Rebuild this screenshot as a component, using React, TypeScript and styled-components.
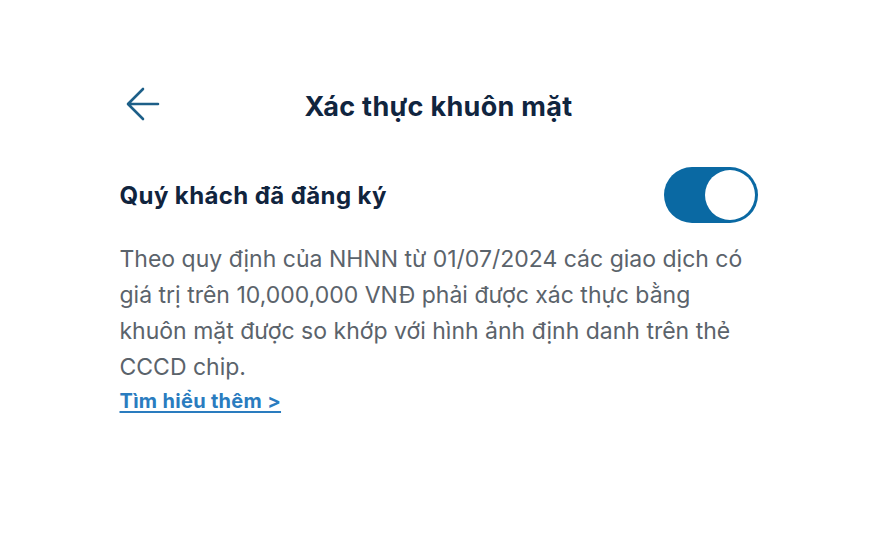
import React, { useState } from "react";
import styled, { createGlobalStyle } from "styled-components";

const GlobalStyle = createGlobalStyle`
  html, body {
    margin: 0;
    padding: 0;
    background: #ffffff;
    font-family: "Inter", "Noto Sans", sans-serif;
  }
`;

const Page = styled.div`
  width: 880px;
  height: 544px;
  box-sizing: border-box;
  padding-right: 3px;
  display: flex;
  justify-content: center;
  background: #ffffff;
`;

const Column = styled.div`
  width: 638px;
  padding-top: 87px;
  display: flex;
  flex-direction: column;
`;

const Header = styled.div`
  position: relative;
  height: 38px;
  display: flex;
  align-items: center;
  justify-content: center;
`;

const BackButton = styled.button`
  position: absolute;
  left: 6px;
  top: 0;
  width: 34px;
  height: 34px;
  padding: 0;
  border: 0;
  background: none;
  cursor: pointer;
  display: flex;
`;

const Title = styled.h1`
  margin: 0;
  font-size: 27px;
  font-weight: 700;
  letter-spacing: 0.3px;
  color: #10253f;
`;

const Row = styled.div`
  margin-top: 42px;
  display: flex;
  align-items: center;
  justify-content: space-between;
`;

const Label = styled.div`
  font-size: 24px;
  font-weight: 700;
  letter-spacing: 0.4px;
  color: #10243e;
`;

const Track = styled.button<{ $on: boolean }>`
  width: 94px;
  height: 56px;
  padding: 3px;
  border: 0;
  border-radius: 28px;
  background: ${(p) => (p.$on ? "#0a69a3" : "#c9cfd6")};
  display: flex;
  justify-content: ${(p) => (p.$on ? "flex-end" : "flex-start")};
  cursor: pointer;
`;

const Thumb = styled.span`
  width: 50px;
  height: 50px;
  border-radius: 50%;
  background: #ffffff;
`;

const Body = styled.p`
  margin: 18px 0 0;
  max-width: 632px;
  font-size: 23px;
  line-height: 36px;
  color: #5b636b;
`;

const More = styled.a`
  margin-top: 4px;
  align-self: flex-start;
  font-size: 20px;
  font-weight: 700;
  letter-spacing: 0.3px;
  color: #2a7cbf;
  text-decoration: underline;
  text-underline-offset: 3px;
`;

export default function App() {
  const [on, setOn] = useState(true);
  return (
    <Page>
      <GlobalStyle />
      <Column>
        <Header>
          <BackButton aria-label="Quay lại">
            <svg width="34" height="34" viewBox="0 0 34 34" fill="none">
              <path
                d="M32 17H3M17 2L2 17l15 15"
                stroke="#1d5f88"
                strokeWidth="2.6"
                strokeLinecap="round"
                strokeLinejoin="round"
              />
            </svg>
          </BackButton>
          <Title>Xác thực khuôn mặt</Title>
        </Header>
        <Row>
          <Label>Quý khách đã đăng ký</Label>
          <Track $on={on} onClick={() => setOn(!on)} aria-label="Bật tắt">
            <Thumb />
          </Track>
        </Row>
        <Body>
          Theo quy định của NHNN từ 01/07/2024 các giao dịch có giá trị trên
          10,000,000 VNĐ phải được xác thực bằng khuôn mặt được so khớp với hình
          ảnh định danh trên thẻ CCCD chip.
        </Body>
        <More href="#">Tìm hiểu thêm &gt;</More>
      </Column>
    </Page>
  );
}
